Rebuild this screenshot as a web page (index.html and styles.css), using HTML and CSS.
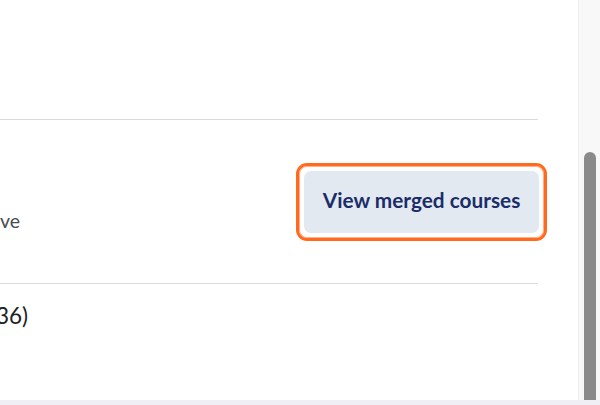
FILE: index.html
```html
<!DOCTYPE html>
<html>
<head>
<meta charset="utf-8">
<link rel="stylesheet" href="styles.css">
</head>
<body>
<div class="window">
  <div class="viewport">
    <div class="content">
      <div class="top-space"></div>
      <div class="row row-merged">
        <div class="row-text">
          <span class="status">ve</span>
        </div>
        <div class="focus-ring">
          <button class="btn">View merged courses</button>
        </div>
      </div>
      <div class="row row-next">
        <span class="code">36)</span>
      </div>
    </div>
    <div class="scrollbar"><div class="thumb"></div></div>
  </div>
  <div class="bottom-strip"></div>
</div>
</body>
</html>
```
FILE: styles.css
```css
html, body {
  margin: 0;
  padding: 0;
  background: #ffffff;
}
body {
  font-family: Lato, "Open Sans", "Liberation Sans", sans-serif;
  width: 600px;
  height: 405px;
  overflow: hidden;
}
.window {
  display: flex;
  flex-direction: column;
  height: 405px;
}
.viewport {
  display: flex;
  height: 400px;
}
.content {
  width: 538px;
  padding-right: 40px;
  overflow: hidden;
}
.top-space {
  height: 119px;
}
.row {
  border-top: 1.5px solid #d8dce2;
}
.row-merged {
  height: 163px;
  display: flex;
  align-items: center;
  justify-content: space-between;
}
.row-text {
  align-self: flex-start;
  padding-top: 89px;
}
.status {
  font-size: 19.5px;
  color: #494c50;
}
.focus-ring {
  border: 3px solid #ff6a1f;
  border-radius: 11px;
  padding: 5px;
  margin-right: -9px;
  margin-top: 0;
  box-shadow: inset 0 0 0 1px #ffb08a;
}
.btn {
  display: block;
  width: 235px;
  height: 62px;
  border: none;
  border-radius: 7px;
  background: #e3e9f1;
  color: #1b2d68;
  font-family: Lato, "Open Sans", "Liberation Sans", sans-serif;
  font-weight: 700;
  font-size: 20.8px;
  padding: 0 0 5px 0;
}
.row-next {
  padding-top: 18px;
  height: 100px;
}
.code {
  display: inline-block;
  margin-left: -4px;
  font-size: 22.5px;
  color: #202122;
}
.scrollbar {
  width: 22px;
  background: #f8f8f8;
  border-left: 1px solid #efefef;
  padding-top: 152px;
  box-sizing: border-box;
  display: flex;
  justify-content: center;
}
.thumb {
  width: 12px;
  height: 248px;
  background: #8a8a8a;
  border-radius: 6px 6px 0 0;
}
.bottom-strip {
  height: 5px;
  background: #f0eff6;
}
```
